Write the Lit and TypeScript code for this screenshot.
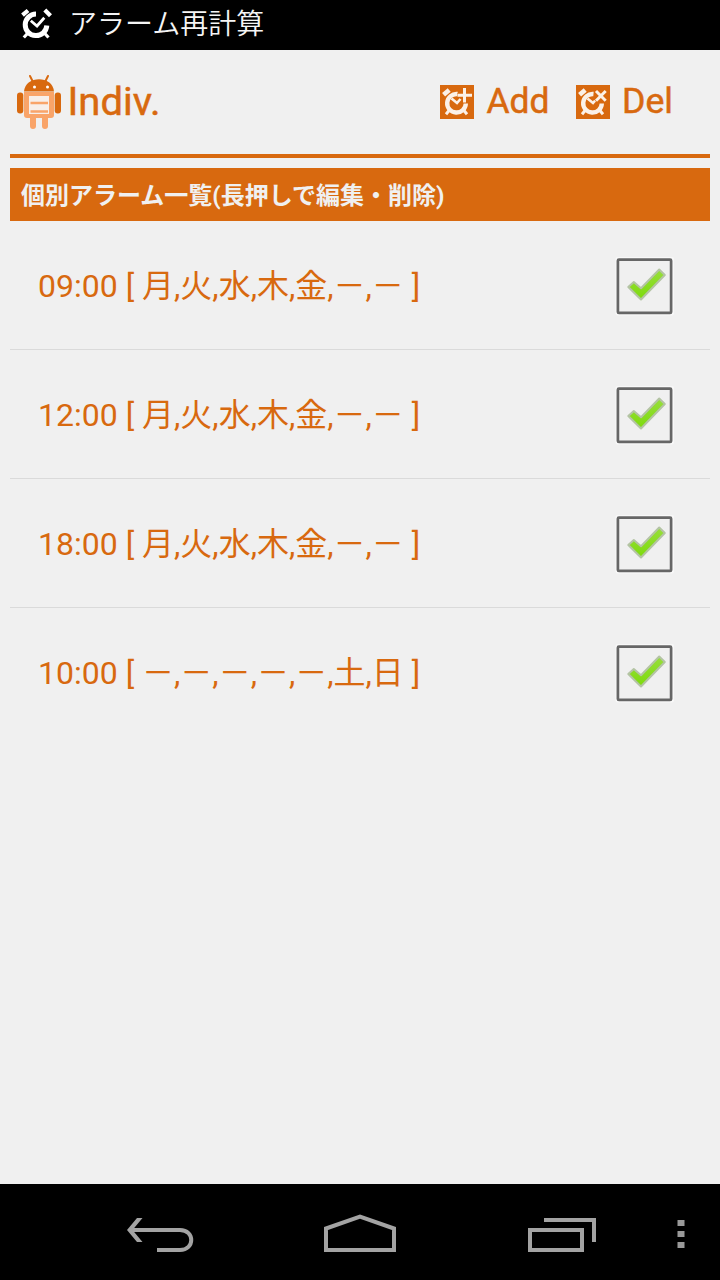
import { LitElement, html, svg, css } from "lit";
import { customElement, property } from "lit/decorators.js";

const statusClock = svg`
  <g fill="none" stroke="#fff">
    <path d="M17 6A10.800 10.800 0 1 0 27.800 17.500" stroke-width="5"/>
    <path d="M3.500 7.200L9 2.500M25.800 2L31.500 7.800" stroke-width="4.200"/>
    <path d="M8.500 25.500L4.800 29.500M25.800 25.500L29.500 29.500" stroke-width="3.200"/>
    <path d="M11.800 12.800L18 18L25.300 9.800" stroke-width="2.800"/>
  </g>`;

const actionClock = (badge: "plus" | "cross") => svg`
  <rect width="34" height="34" fill="#d8690f"/>
  <g fill="none" stroke="#fbf1e8">
    <path d="M17.500 9A9.300 9.300 0 1 0 25.800 18.500" stroke-width="4.400"/>
    <path d="M3.600 9.800L9.200 5" stroke-width="4.600"/>
    <path d="M9.500 25L6 29.300M23.500 25L27 29.300" stroke-width="3"/>
    <path d="M11.500 13.500L17 18L20.500 14" stroke-width="2.600"/>
    ${badge === "plus"
      ? svg`<path d="M24.500 2.500V17.500M17.500 10.200H32" stroke="#d8690f" stroke-width="4.600"/><path d="M24.500 3V17.500M17.500 10.200H32" stroke-width="3"/>`
      : svg`<path d="M19.500 5.500L30 16M30 5.500L19.500 16" stroke="#d8690f" stroke-width="5"/><path d="M20 6L29.700 15.700M29.700 6L20 15.700" stroke-width="3"/>`}
  </g>`;

@customElement("alarm-row")
class AlarmRow extends LitElement {
  @property() label = "";
  static styles = css`
    :host { display: flex; align-items: center; justify-content: space-between; height: 128px; padding: 2px 35px 0 28px; box-sizing: border-box; }
    .label { font: 32px/40px Roboto, "Noto Sans CJK JP", sans-serif; color: #d8690f; white-space: pre; }
    svg { display: block; }
  `;
  render() {
    return html`<span class="label">${this.label}</span>
      <svg width="60" height="60" viewBox="0 0 60 60">
        <defs><linearGradient id="g" x1="0" y1="0" x2="0" y2="1"><stop offset="0" stop-color="#98de3c"/><stop offset="1" stop-color="#7ddb0c"/></linearGradient></defs>
        <rect x="0.5" y="1" width="58.500" height="58.500" rx="2" fill="#f8f8f8"/>
        <rect x="2.900" y="3.700" width="53.200" height="53.200" rx="1" fill="#f0f0f0" stroke="#666" stroke-width="2.700"/>
        <path d="M13.300 31L18.800 26L26 32.200L44.200 13.500L49.800 19L26 43.500Z" fill="url(#g)" stroke="#b4c4a4" stroke-width="2" stroke-linejoin="round"/>
      </svg>`;
  }
}

@customElement("app-root")
class AppRoot extends LitElement {
  static styles = css`
    :host { display: flex; flex-direction: column; height: 1280px; width: 720px; background: #f0f0f0; overflow: hidden; }
    svg { display: block; flex: none; }
    svg text { font-family: Roboto, sans-serif; fill: #d8690f; stroke: #d8690f; stroke-width: 0.5px; }
    .status { display: flex; align-items: center; height: 50px; background: #000; color: #f5f5f5; padding-left: 19px; box-sizing: border-box; }
    .status span { font: 28px/44px "Noto Sans CJK JP", sans-serif; font-weight: 350; padding: 0 0 6px 16px; }
    .bar { display: flex; align-items: center; height: 104px; padding: 0 10px; }
    .brand { display: flex; align-items: center; flex: 1; padding-left: 6px; }
    .action { display: flex; align-items: center; gap: 12px; }
    .actions { display: flex; gap: 26px; padding-right: 36px; }
    .body { flex: 1; padding: 0 10px; }
    .rule { height: 4px; background: #d8690f; margin-bottom: 10px; }
    .title { height: 53px; box-sizing: border-box; background: #d8690f; color: #f0f0f0; font: bold 24px/49px Roboto, "Noto Sans CJK JP", sans-serif; padding: 4px 0 0 11px; }
    .list alarm-row + alarm-row { border-top: 1px solid #dadada; height: 129px; }
    .nav { height: 96px; background: #000; }
  `;
  render() {
    const rows = [
      "09:00 [ 月,火,水,木,金,－,－ ]",
      "12:00 [ 月,火,水,木,金,－,－ ]",
      "18:00 [ 月,火,水,木,金,－,－ ]",
      "10:00 [ －,－,－,－,－,土,日 ]",
    ];
    return html`
      <div class="status">
        <svg width="34" height="34" viewBox="0 0 34 34">${statusClock}</svg>
        <span>アラーム再計算</span>
      </div>
      <div class="bar">
        <div class="brand">
          <svg width="46" height="56" viewBox="0 0 46 56">
            <path d="M14 2L17 8M32 2L29 8" stroke="#d8690f" stroke-width="2" stroke-linecap="round"/>
            <path d="M8 17.500C9 1 37 1 38 17.500Z" fill="#d8690f"/>
            <circle cx="18.500" cy="13" r="1.500" fill="#fff"/><circle cx="31.500" cy="13" r="1.500" fill="#fff"/>
            <rect x="1" y="18.500" width="6.300" height="21" rx="3" fill="#d8690f"/><rect x="38.700" y="18.500" width="6.300" height="21" rx="3" fill="#d8690f"/>
            <path d="M8 18H38V41Q38 44 35 44H32V52Q32 55 29 55T26 52V44H20V52Q20 55 17 55T14 52V44H11Q8 44 8 41Z" fill="#f9a469"/>
            <path d="M13 22H33V40H13Z" fill="#f7efea"/>
            <path d="M14.500 29H32M14.500 37.500H32" stroke="#f9a469" stroke-width="2.400"/>
          </svg>
          <svg width="100" height="50"><text x="5.500" y="38" font-size="39" textLength="93" lengthAdjust="spacingAndGlyphs">Indiv.</text></svg>
        </div>
        <div class="actions">
          <div class="action">
            <svg width="34" height="34" viewBox="0 0 34 34">${actionClock("plus")}</svg>
            <svg width="64" height="50"><text x="0.500" y="36" font-size="35" textLength="63" lengthAdjust="spacingAndGlyphs">Add</text></svg>
          </div>
          <div class="action">
            <svg width="34" height="34" viewBox="0 0 34 34">${actionClock("cross")}</svg>
            <svg width="52" height="50"><text x="0" y="36" font-size="35" textLength="51" lengthAdjust="spacingAndGlyphs">Del</text></svg>
          </div>
        </div>
      </div>
      <div class="body">
        <div class="rule"></div>
        <div class="title">個別アラーム一覧(長押しで編集・削除)</div>
        <div class="list">${rows.map((r) => html`<alarm-row .label=${r}></alarm-row>`)}</div>
      </div>
      <div class="nav">
        <svg width="720" height="96" viewBox="0 0 720 96" fill="none" stroke="#a3a3a3" stroke-width="4">
          <path d="M131 46H180C195 46 195 66 180 66H157"/>
          <path d="M137 34H142.500L132.500 46L142.500 58H137L127 46Z" fill="#a3a3a3" stroke="none"/>
          <path d="M326 66V44.500L360 32.500L394 44.500V66Z"/>
          <path d="M530 46H582V66H530ZM544 36H594V58"/>
          <path d="M677.500 36H684.500V42H677.500ZM677.500 47H684.500V53H677.500ZM677.500 58H684.500V64H677.500Z" fill="#999" stroke="none"/>
        </svg>
      </div>`;
  }
}
